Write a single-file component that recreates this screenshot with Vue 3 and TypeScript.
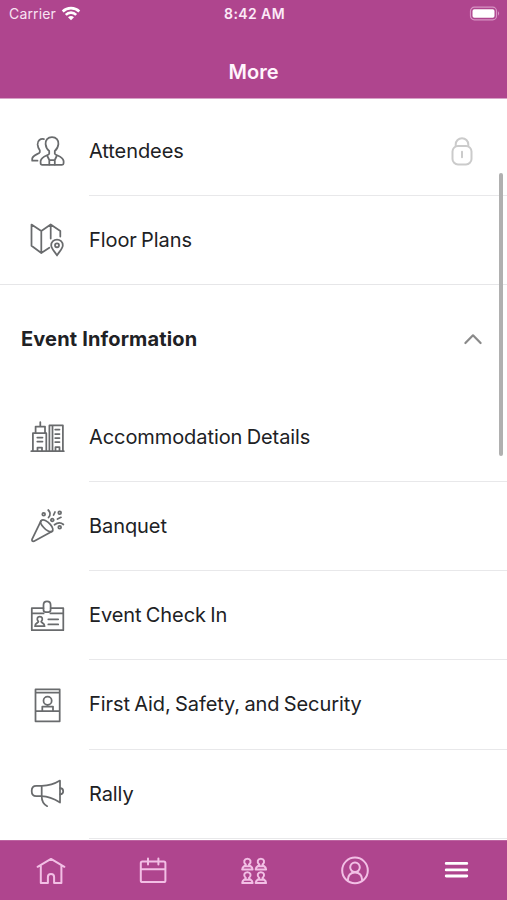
<script setup lang="ts">
interface MenuItem {
  label: string
  paths: string[]
  locked?: boolean
}

const topItems: MenuItem[] = [
  {
    label: 'Attendees',
    locked: true,
    paths: [
      'M22 3.2C17.8 3.2 15.2 6.2 15.6 10.2C15.9 13.2 17.1 15.4 19.2 17V19.7C18.5 21.8 11.8 21.5 10.6 27V29.3Q10.6 30.9 12.3 30.9H32Q33.6 30.9 33.6 29.3V27C32.5 21.5 25.6 21.8 24.8 19.7V17C26.8 15.4 28.1 13.2 28.4 10.2C28.8 6.2 26.2 3.2 22 3.2Z',
      'M17.3 22L19.3 26V30.6M26.7 22L24.8 26V30.6M19.3 26H24.8',
      'M14 5.1C10.5 4.2 7.4 6.7 7.6 10.4C7.8 13 8.4 14.7 9.8 16.3V18.2C9.2 20.1 2.8 20.6 2.2 24.7V26.7H7.5',
    ],
  },
  {
    label: 'Floor Plans',
    paths: [
      'M19.3 25.7L11.3 31L1.5 23.7V2.5L11.3 9L20.7 2.5L30.3 9V14.5M11.3 9V31M20.7 2.5V16.5',
      'M27 33.5C25.5 30.3 21.2 27 21.2 23.3A5.8 5.8 0 0 1 32.8 23.3C32.8 27 28.5 30.3 27 33.5Z',
      'M29 23.3A2 2 0 1 1 25 23.3A2 2 0 1 1 29 23.3Z',
    ],
  },
]

const eventItems: MenuItem[] = [
  {
    label: 'Accommodation Details',
    paths: [
      'M1.3 32.2H33.8M2.9 32V14.2H16.3V32M5.6 14V7.5H15V14M10.3 7.5V3',
      'M19.4 32V6.4H32.9V32M22.5 6.4V32M7.3 18.5H12.5M7.3 22.5H12.5M25.2 10.5H29.5M25.2 15H29.5M25.2 19H29.5M25.2 23H29.5',
      'M7.5 32V28.5H12V32M25.5 32V28H29.5V32',
    ],
  },
  {
    label: 'Banquet',
    paths: [
      'M11 12.8L2 31.4Q1.7 33.8 4 33.2L22.3 23.3',
      'M11 12.8C13 10.6 17.5 13 20.3 16.4C22.8 19.3 23.7 22.5 22 23.4C20.1 24.5 16.3 22.6 13.7 19.5C11.3 16.8 9.9 14 11 12.8Z',
      'M18.2 2C20.5 4.2 20.5 7.2 18.5 9.5M25 4L23.6 7M24.5 16.8C27.5 14.4 31 14.4 33.4 16.5M27.5 11L31 9.3',
      'M15.1 6.3A1.4 1.4 0 1 1 12.3 6.3A1.4 1.4 0 1 1 15.1 6.3ZM23.7 12A1.4 1.4 0 1 1 20.9 12A1.4 1.4 0 1 1 23.7 12ZM31.1 4.7A1.4 1.4 0 1 1 28.3 4.7A1.4 1.4 0 1 1 31.1 4.7ZM31.1 19.3A1.4 1.4 0 1 1 28.3 19.3A1.4 1.4 0 1 1 31.1 19.3Z',
    ],
  },
  {
    label: 'Event Check In',
    paths: [
      'M13.4 10.2H1.8V32.2H33.3V10.2H20.7M1.8 15.4H13.6M20.4 15.4H33.3',
      'M13.5 7Q13.5 3.4 17 3.4Q20.6 3.4 20.6 7V11.7Q20.6 14 18.5 14H15.6Q13.5 14 13.5 11.7Z',
      'M8.4 23.6C6.2 20.8 7.4 18.7 9.8 18.7C12.2 18.7 13.4 20.8 11.2 23.6C11.3 25.3 14.5 24.5 14.6 28.2H5C5.1 24.5 8.3 25.3 8.4 23.6ZM18.3 21.3H28.2M18.3 26.4H28.2',
    ],
  },
  {
    label: 'First Aid, Safety, and Security',
    paths: [
      'M5.5 2.4H29.7V34.3H5.5ZM5.5 5.5H29.7M5.5 24H29.7',
      'M21.7 13.7A4.1 4.1 0 1 1 13.5 13.7A4.1 4.1 0 1 1 21.7 13.7ZM12.3 24V19.6H23V24',
    ],
  },
  {
    label: 'Rally',
    paths: [
      'M30 4.6V26.5C24 22.8 18 20.4 11.7 20.2H6.3Q1.7 20.2 1.7 15Q1.7 9.9 6.3 9.9H11.7C18 9.7 24 8.3 30 4.6ZM11.7 9.9V20.2',
      'M11.7 20.2C11.7 25 13.6 28.3 17.2 30.2M30.2 12.2Q33.2 12.4 33.2 15.3Q33.2 18.2 30.2 18.4',
    ],
  },
]

interface Tab {
  name: string
  paths: string[]
  active?: boolean
}

const person = (x: number, y: number): string =>
  `M${x - 1.6} ${y + 5.8}C${x - 4.6} ${y + 3} ${x - 3} ${y} ${x} ${y}C${x + 3} ${y} ${x + 4.6} ${y + 3} ${x + 1.6} ${y + 5.8}C${x + 2.6} ${y + 7.8} ${x + 5} ${y + 7} ${x + 5.2} ${y + 10.8}H${x - 5.2}C${x - 5} ${y + 7} ${x - 2.6} ${y + 7.8} ${x - 1.6} ${y + 5.8}ZM${x - 2} ${y + 7.5}H${x + 2}`

const tabs: Tab[] = [
  {
    name: 'home',
    paths: ['M4.6 14.8L18 6.9L31.4 14.8M7.8 13.5V31H14.9V25Q14.9 22 18 22Q21.1 22 21.1 25V31H28.4V13.5'],
  },
  {
    name: 'calendar',
    paths: ['M8.4 9.6H29.8Q31.4 9.6 31.4 11.2V28.4Q31.4 30 29.8 30H8.4Q6.8 30 6.8 28.4V11.2Q6.8 9.6 8.4 9.6ZM6.8 17.3H31.4M14 6.5V12.5M24.4 6.5V12.5'],
  },
  { name: 'groups', paths: [person(11.4, 6.8), person(24.9, 6.8), person(11.4, 20.3), person(24.9, 20.3)] },
  {
    name: 'profile',
    paths: [
      'M30.8 18.4A12.8 12.8 0 1 1 5.2 18.4A12.8 12.8 0 1 1 30.8 18.4Z',
      'M22.8 15.3A4.8 4.8 0 1 1 13.2 15.3A4.8 4.8 0 1 1 22.8 15.3ZM10.8 28.2C11 23 14 20.6 18 20.6C22 20.6 25 23 25.2 28.2',
    ],
  },
  { name: 'more', active: true, paths: ['M8.2 11.4H28.8M8.2 17.9H28.8M8.2 24H28.8'] },
]
</script>

<template>
  <div class="screen">
    <header class="header">
      <div class="status">
        <div class="carrier">
          <span>Carrier</span>
          <svg class="wifi" viewBox="0 0 20 15">
            <path d="M1.7 5.5C6.3 1 13.7 1 18.3 5.5M4.8 8.8C7.7 5.9 12.3 5.9 15.2 8.8" />
            <path class="solid" d="M7 11.2Q10 8.9 13 11.2L10 14.3Z" />
          </svg>
        </div>
        <span class="time">8:42 AM</span>
        <div class="power">
          <svg class="battery" viewBox="0 0 32 16">
            <rect class="shell" x="1.5" y="1.2" width="26" height="12.6" rx="3.8" />
            <rect class="charge" x="3.5" y="3.2" width="22" height="8.6" rx="1.8" />
            <path class="cap" d="M29 5.3Q31.2 7.5 29 9.7Z" />
          </svg>
        </div>
      </div>
      <h1 class="title">More</h1>
    </header>

    <main class="list">
      <section class="group first">
        <div v-for="item in topItems" :key="item.label" class="row">
          <svg class="icon" viewBox="0 0 36 36"><path v-for="d in item.paths" :key="d" :d="d" /></svg>
          <div class="cell">
            <span>{{ item.label }}</span>
            <svg v-if="item.locked" class="lock" viewBox="0 0 24 32">
              <rect x="2.5" y="11" width="19" height="18.4" rx="5.5" />
              <path d="M5.7 11V9.5A6.3 6.3 0 0 1 18.3 9.5V11M12 16.7V22.2" />
            </svg>
          </div>
        </div>
      </section>

      <section class="group">
        <div class="group-head">
          <h2>Event Information</h2>
          <svg class="chevron" viewBox="0 0 20 14"><path d="M2.4 11L10 3.3L17.6 11" /></svg>
        </div>
        <div v-for="item in eventItems" :key="item.label" class="row">
          <svg class="icon" viewBox="0 0 36 36"><path v-for="d in item.paths" :key="d" :d="d" /></svg>
          <div class="cell"><span>{{ item.label }}</span></div>
        </div>
      </section>
      <div class="scrollbar"></div>
    </main>

    <nav class="tabs">
      <div v-for="tab in tabs" :key="tab.name" class="tab" :class="{ active: tab.active }">
        <svg viewBox="0 0 36 36"><path v-for="d in tab.paths" :key="d" :d="d" /></svg>
      </div>
    </nav>
  </div>
</template>

<style>
body {
  margin: 0;
  background: #fff;
}
</style>

<style scoped>
.screen {
  display: flex;
  flex-direction: column;
  height: 900px;
  overflow: hidden;
  background: #fff;
  color: #202124;
  font-family: Inter, "Liberation Sans", sans-serif;
}
svg {
  display: block;
  fill: none;
  stroke-linecap: round;
  stroke-linejoin: round;
}
.header {
  flex: none;
  box-sizing: border-box;
  height: 99px;
  border-bottom: 1px solid #d7a2c7;
  background: #af458e;
  color: #fff;
}
.status {
  display: grid;
  grid-template-columns: 1fr auto 1fr;
  align-items: center;
  height: 27px;
  padding: 0 6px 0 9px;
  font-size: 14px;
}
.carrier {
  display: flex;
  align-items: center;
  gap: 5px;
  letter-spacing: 0.15px;
  color: #f8e3f3;
}
.wifi {
  width: 20px;
  height: 15px;
  stroke: #fff;
  stroke-width: 2.6;
  stroke-linecap: butt;
}
.wifi .solid {
  fill: #fff;
  stroke: none;
}
.time {
  font-weight: 600;
  letter-spacing: 0.4px;
  margin-right: 1px;
  color: #fceaf8;
}
.power {
  display: flex;
  justify-content: flex-end;
}
.battery {
  width: 32px;
  height: 16px;
}
.shell {
  stroke: #d793c4;
  stroke-width: 1.2;
}
.charge {
  fill: #fff;
}
.cap {
  fill: #d793c4;
}
.title {
  margin: 0;
  padding-top: 32px;
  font-size: 20px;
  line-height: 26px;
  font-weight: 600;
  text-align: center;
  color: #fff4fc;
}
.list {
  position: relative;
  flex: 1;
  min-height: 0;
  overflow: hidden;
}
.group.first {
  padding-top: 8px;
  border-bottom: 1px solid #e6e6e8;
}
.row {
  display: flex;
  align-items: center;
  height: 89.25px;
  padding-left: 30px;
}
.icon {
  flex: none;
  width: 36px;
  height: 36px;
  margin-right: 23px;
  stroke: #696b6d;
  stroke-width: 1.75;
}
.cell {
  box-sizing: border-box;
  display: flex;
  flex: 1;
  align-items: center;
  justify-content: space-between;
  height: 100%;
  padding-right: 33px;
  border-bottom: 1.5px solid #e8e8ea;
  font-size: 20px;
  letter-spacing: -0.08px;
  word-spacing: -1.2px;
}
.first .row:last-child {
  height: 87.75px;
}
.first .row:last-child .cell {
  border-bottom: none;
}
.lock {
  width: 24px;
  height: 32px;
  stroke: #cbcbcb;
  stroke-width: 2;
}
.group-head {
  display: flex;
  align-items: center;
  justify-content: space-between;
  height: 107.5px;
  padding: 0 24px 0 21px;
}
.group-head h2 {
  margin: 0;
  font-size: 20px;
  font-weight: 700;
  letter-spacing: 0.16px;
}
.chevron {
  width: 20px;
  height: 14px;
  stroke: #8a8a8a;
  stroke-width: 2.2;
}
.scrollbar {
  position: absolute;
  top: 74px;
  right: 4px;
  width: 4px;
  height: 283px;
  border-radius: 2px;
  background: #b0b0b0;
}
.tabs {
  display: flex;
  flex: none;
  box-sizing: border-box;
  height: 60px;
  border-top: 1px solid #bd64a1;
  background: #af458e;
}
.tab {
  display: flex;
  flex: 1;
  justify-content: center;
  padding-top: 11px;
}
.tab svg {
  width: 36px;
  height: 36px;
  stroke: #f2bfe5;
  stroke-width: 2;
}
.tab.active svg {
  stroke: #fff;
  stroke-width: 2.8;
}
</style>
